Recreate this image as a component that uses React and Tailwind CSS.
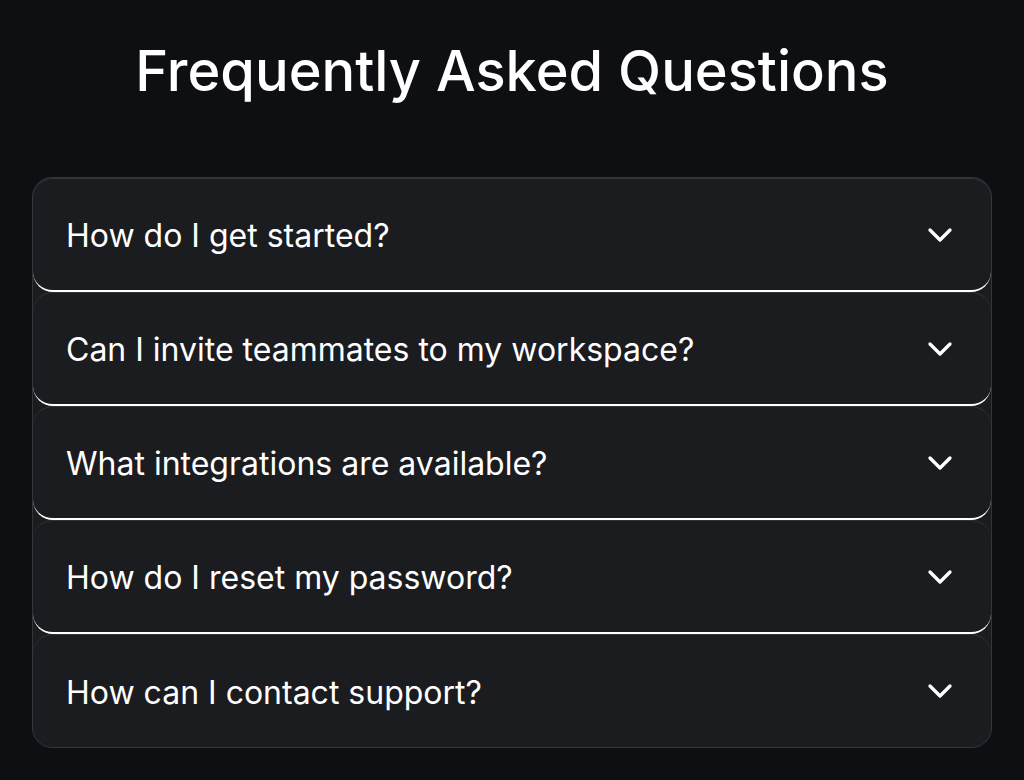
import React, { useState } from 'react';
import { ChevronDown } from 'lucide-react';

const faqs = [
  { q: 'How do I get started?', a: 'Create an account, set up your workspace and follow the onboarding checklist.' },
  { q: 'Can I invite teammates to my workspace?', a: 'Yes. Open Settings → Members and send an invite by email.' },
  { q: 'What integrations are available?', a: 'We connect with Slack, GitHub, Google Drive, Notion and more.' },
  { q: 'How do I reset my password?', a: 'Use the “Forgot password” link on the sign-in page.' },
  { q: 'How can I contact support?', a: 'Reach us any time through the help widget or by email.' },
];

const FaqItem = ({ item, last, open, onToggle }) => (
  <div
    className={`rounded-[20px] border-t border-t-white/10 ${last ? '' : 'border-b-2 border-b-white'}`}
  >
    <button
      onClick={onToggle}
      className={`w-full ${last ? 'h-[112px]' : 'h-[111px]'} flex items-center justify-between pl-[33px] pr-[31px] text-left`}
    >
      <span className="pt-1 text-[32px] leading-[1.2] text-white font-normal">{item.q}</span>
      <ChevronDown
        size={40}
        strokeWidth={2}
        className={`text-white transition-transform ${open ? 'rotate-180' : ''}`}
      />
    </button>
    {open && <div className="px-[33px] pb-8 text-2xl text-white/60">{item.a}</div>}
  </div>
);

export default function App() {
  const [openIdx, setOpenIdx] = useState(null);

  return (
    <div
      className="min-h-screen bg-[#0e0f13] px-8 pt-[38px] pb-8"
      style={{ fontFamily: 'Inter, "Noto Sans", sans-serif' }}
    >
      <h1 className="text-center text-[56px] leading-[1.2] font-medium text-white">
        Frequently Asked Questions
      </h1>
      <div className="mt-[72px] rounded-[20px] border border-[#34353a] bg-[#1b1c20] overflow-hidden">
        {faqs.map((f, i) => (
          <FaqItem
            key={f.q}
            item={f}
            last={i === faqs.length - 1}
            open={openIdx === i}
            onToggle={() => setOpenIdx(openIdx === i ? null : i)}
          />
        ))}
      </div>
    </div>
  );
}
